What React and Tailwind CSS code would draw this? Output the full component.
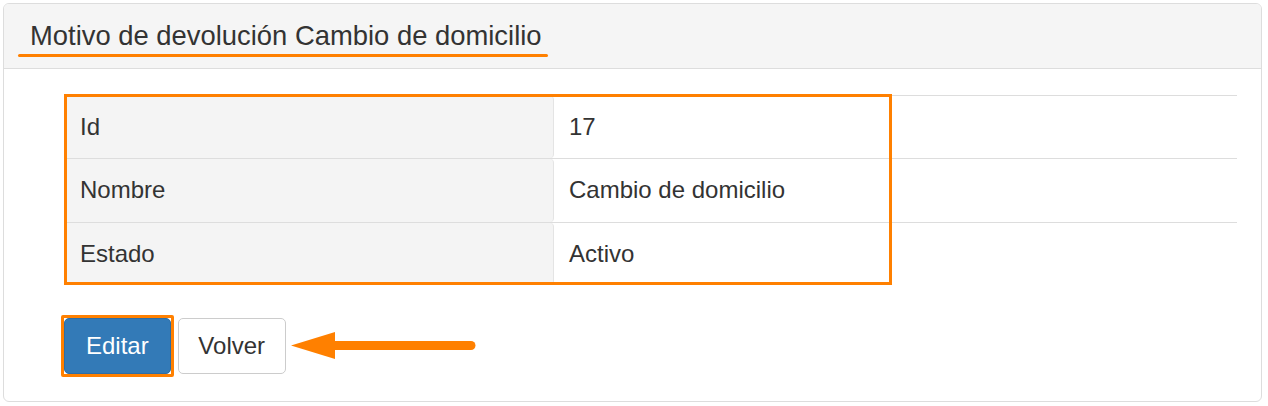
const rows = [
  { label: 'Id', value: '17' },
  { label: 'Nombre', value: 'Cambio de domicilio' },
  { label: 'Estado', value: 'Activo' },
];

const BackArrow = () => (
  <svg width="190" height="28" viewBox="0 0 190 28" className="ml-[5px]">
    <line x1="40" y1="13.5" x2="180" y2="13.5" stroke="#ff8000" strokeWidth="9" strokeLinecap="round" />
    <polygon points="0,13.5 44,0 44,27" fill="#ff8000" />
  </svg>
);

export default function App() {
  return (
    <div className="bg-white min-h-[406px] pt-[3px] pl-[3px]" style={{ fontFamily: '"Liberation Sans", Arial, sans-serif' }}>
      <div className="w-[1259px] border border-[#dddddd] rounded-[6px] bg-white text-[#333333] overflow-hidden">
        {/* heading */}
        <div className="relative bg-[#f5f5f5] border-b border-[#dddddd] px-[26px] py-[17px]">
          <h3 className="text-[27.4px] leading-[30px]">Motivo de devolución Cambio de domicilio</h3>
          <div className="absolute left-[14px] top-[50px] w-[530px] h-[3px] rounded-full bg-[#ff8000]" />
        </div>

        {/* body */}
        <div className="pt-[26px] pb-[24px] pl-[60px] pr-[24px]">
          <div className="relative">
            <div className="text-[24px] leading-[34.3px]">
              {rows.map((r) => (
                <div key={r.label} className="flex border-t border-[#dddddd]">
                  <div className="w-[490px] shrink-0 bg-[#f4f4f4] rounded-[4px] border-r border-[#e4e4e4] px-[16px] py-[14px]">
                    {r.label}
                  </div>
                  <div className="flex-1 px-[15px] py-[14px]">{r.value}</div>
                </div>
              ))}
            </div>
            <div className="absolute left-0 top-[-1px] w-[828px] h-[191px] border-[3px] border-[#ff8000]" />
          </div>

          <div className="flex items-center mt-[30px] -ml-[3px]">
            <div className="border-[3px] border-[#ff8000] rounded-[2px]">
              <button className="block h-[56px] px-[21px] text-[24px] leading-[34px] text-white bg-[#337ab7] border border-[#2e6da4] rounded-[5px]">
                Editar
              </button>
            </div>
            <button className="ml-[4px] h-[56px] w-[108px] text-[24px] leading-[34px] text-[#333333] bg-white border border-[#cccccc] rounded-[5px]">
              Volver
            </button>
            <BackArrow />
          </div>
        </div>
      </div>
    </div>
  );
}
